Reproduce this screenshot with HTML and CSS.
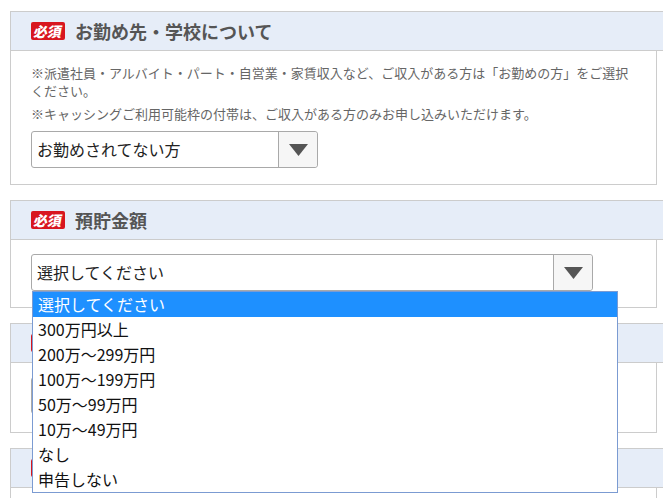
FILE: index.html
```html
<!DOCTYPE html>
<html lang="ja">
<head>
<meta charset="utf-8">
<title>お申し込みフォーム</title>
<link rel="stylesheet" href="styles.css">
</head>
<body>
<div class="page">
  <section class="block">
    <div class="block-head">
      <span class="badge"><span class="badge-text">必須</span></span>
      <h2 class="block-title">お勤め先・学校について</h2>
    </div>
    <div class="block-body block-body--notes">
      <p class="note">※派遣社員・アルバイト・パート・自営業・家賃収入など、ご収入がある方は「お勤めの方」をご選択ください。</p>
      <p class="note">※キャッシングご利用可能枠の付帯は、ご収入がある方のみお申し込みいただけます。</p>
      <div class="select select--short">
        <span class="select-value">お勤めされてない方</span>
        <span class="select-arrow"><svg width="19" height="12" viewBox="0 0 19 12"><polygon points="0,0 19,0 9.5,12" fill="#555"/></svg></span>
      </div>
    </div>
  </section>

  <section class="block">
    <div class="block-head">
      <span class="badge"><span class="badge-text">必須</span></span>
      <h2 class="block-title">預貯金額</h2>
    </div>
    <div class="block-body">
      <div class="select select--long select--open">
        <span class="select-value">選択してください</span>
        <span class="select-arrow"><svg width="19" height="12" viewBox="0 0 19 12"><polygon points="0,0 19,0 9.5,12" fill="#555"/></svg></span>
        <ul class="dropdown">
          <li class="option option--active">選択してください</li>
          <li class="option">300万円以上</li>
          <li class="option">200万～299万円</li>
          <li class="option">100万～199万円</li>
          <li class="option">50万～99万円</li>
          <li class="option">10万～49万円</li>
          <li class="option">なし</li>
          <li class="option">申告しない</li>
        </ul>
      </div>
    </div>
  </section>

  <section class="block">
    <div class="block-head">
      <span class="badge"><span class="badge-text">必須</span></span>
      <h2 class="block-title">借入状況</h2>
    </div>
    <div class="block-body block-body--tall">
      <div class="select select--long">
        <span class="select-value">選択してください</span>
        <span class="select-arrow"><svg width="19" height="12" viewBox="0 0 19 12"><polygon points="0,0 19,0 9.5,12" fill="#555"/></svg></span>
      </div>
    </div>
  </section>

  <section class="block">
    <div class="block-head">
      <span class="badge"><span class="badge-text">必須</span></span>
      <h2 class="block-title">住居の種類</h2>
    </div>
    <div class="block-body">
      <div class="select select--long">
        <span class="select-value">選択してください</span>
        <span class="select-arrow"><svg width="19" height="12" viewBox="0 0 19 12"><polygon points="0,0 19,0 9.5,12" fill="#555"/></svg></span>
      </div>
    </div>
  </section>
</div>
</body>
</html>
```

FILE: styles.css
```css
* { box-sizing: border-box; }
html, body {
  margin: 0;
  padding: 0;
  background: #fff;
  overflow: hidden;
}
body {
  font-family: "Noto Sans CJK JP", "Noto Sans", sans-serif;
  color: #222;
}
.page {
  padding: 11px 0 0 10px;
  width: 663px;
}
.block {
  width: 647px;
  border-left: 1px solid #ccc;
  border-right: 1px solid #ccc;
  border-bottom: 1px solid #ccc;
  margin-bottom: 15px;
}
.block-head {
  display: flex;
  align-items: center;
  height: 40px;
  margin-left: -1px;
  margin-right: -30px;
  background: #e6edf8;
  border-top: 1px solid #ccc;
  border-bottom: 1px solid #ccc;
  border-left: 1px solid #ccc;
  padding-left: 20px;
}
.badge {
  display: inline-flex;
  align-items: center;
  justify-content: center;
  width: 34px;
  height: 18px;
  background: #d8161f;
  border-radius: 2px;
}
.badge-text {
  display: block;
  color: #fff;
  font-size: 14px;
  font-weight: 900;
  line-height: 18px;
  letter-spacing: 0;
  transform: skewX(-10deg);
}
.block-title {
  margin: 0 0 0 10px;
  font-size: 18px;
  line-height: 24px;
  font-weight: 700;
  color: #555;
}
.block-body {
  padding: 14px 20px 16px;
}
.block-body--notes {
  padding-top: 13px;
  padding-bottom: 16px;
}
.block-body--tall {
  padding-bottom: 18px;
}
.note {
  margin: 0 0 5px;
  font-size: 13px;
  line-height: 18px;
  color: #666;
}
.note + .select { margin-top: 8px; }
.select {
  position: relative;
  display: flex;
  height: 37px;
  border: 1px solid #a9a9a9;
  border-radius: 3px;
  background: #fff;
}
.select--short { width: 287px; }
.select--long { width: 562px; }
.select-value {
  flex: 1;
  padding-left: 5px;
  font-size: 16px;
  line-height: 35px;
  color: #222;
}
.select-arrow {
  display: flex;
  align-items: center;
  justify-content: center;
  width: 39px;
  border-left: 1px solid #a9a9a9;
  background: #f6f6f6;
  border-radius: 0 3px 3px 0;
}
.select-arrow svg { display: block; }
.dropdown {
  position: absolute;
  top: 36px;
  left: 0;
  z-index: 10;
  width: 586px;
  margin: 0;
  padding: 0;
  list-style: none;
  background: #fff;
  border: 1px solid #7b9bd2;
}
.option {
  height: 25px;
  padding-left: 5px;
  font-size: 16px;
  line-height: 25px;
  color: #111;
  white-space: nowrap;
}
.option--active {
  background: #1e90ff;
  color: #fff;
}
```
